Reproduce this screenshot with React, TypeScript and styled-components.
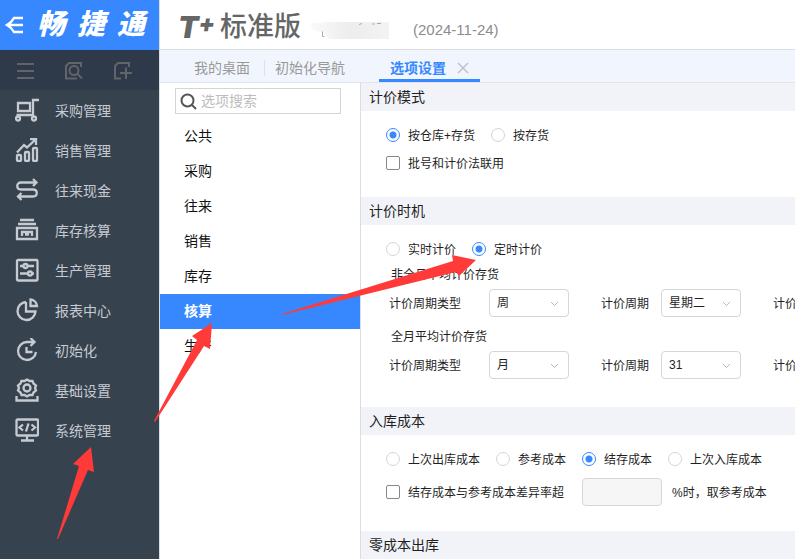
import React from "react";
import styled, { createGlobalStyle, css } from "styled-components";

const blue = "#3788ff";
const line = "#dcdde0";

const GlobalStyle = createGlobalStyle`
  *, *::before, *::after { box-sizing: border-box; }
  body {
    margin: 0;
    background: #fff;
    color: #1f1f1f;
    font-family: "Liberation Sans", "Noto Sans CJK SC", sans-serif;
    font-size: 12px;
  }
  button, input, select { font: inherit; color: inherit; }
`;

const Page = styled.div`
  position: relative;
  display: grid;
  grid-template-columns: 160px minmax(0, 1fr);
  min-height: 100vh;
  overflow: hidden;
`;

const Sidebar = styled.aside`
  display: flex;
  flex-direction: column;
  background: #37424f;
  border-right: 1px solid ${line};
`;

const Brand = styled.div`
  display: flex;
  align-items: center;
  height: 50px;
  padding-left: 5px;
  background: ${blue};
  color: #fff;
`;

const IconButton = styled.button`
  display: flex;
  padding: 0;
  border: 0;
  background: none;
  color: inherit;
  cursor: pointer;
`;

const BrandName = styled.div`
  display: flex;
  gap: 12px;
  margin-left: 14px;
  font-size: 28px;
  line-height: 50px;
  font-weight: 900;
  font-style: italic;
`;

const QuickBar = styled.div`
  display: flex;
  align-items: center;
  gap: 29px;
  height: 40px;
  padding: 2px 0 0 15px;
  background: #2e394a;
  color: #626468;
`;

const NavLink = styled.a`
  display: flex;
  align-items: center;
  gap: 16px;
  height: 40px;
  padding-left: 15px;
  color: #c6cad1;
  font-size: 14px;
  text-decoration: none;
`;

const Main = styled.main`
  display: flex;
  flex-direction: column;
  min-width: 0;
`;

const Header = styled.header`
  display: flex;
  align-items: center;
  height: 50px;
  padding-left: 18px;
  border-bottom: 1px solid ${line};
  color: #666;
`;

const Product = styled.div`
  display: flex;
  align-items: center;
  padding-top: 4px;
  font-size: 27px;
  line-height: 44px;
  font-weight: 500;
`;

const Mark = styled.span`
  width: 42px;
  font-family: Inter, sans-serif;
  font-size: 30px;
  font-weight: 900;
  font-style: italic;
`;

const Sup = styled.span`
  font-size: 24px;
  vertical-align: 6px;
  line-height: 1;
`;

const Account = styled.svg`
  margin: 13px 24px 0 9px;
`;

const Today = styled.span`
  padding-top: 9px;
  color: #8c8c8c;
  font-size: 15px;
`;

const TabBar = styled.nav`
  display: flex;
  height: 33px;
  padding-left: 24px;
  background: #f1f6fe;
  border-bottom: 1px solid #e2e6ec;
`;

const Tab = styled.div<{ $active?: boolean }>`
  position: relative;
  display: flex;
  align-items: center;
  gap: 11px;
  padding: 3px 11px 0 11px;
  color: #999;
  font-size: 14px;
  &:first-child { padding-right: 14px; padding-left: 10px; }
  & + &::before {
    content: "";
    position: absolute;
    left: 0;
    top: 10px;
    width: 1px;
    height: 16px;
    background: #dde1e8;
  }
  ${(p) => p.$active && css`
    color: ${blue};
    font-weight: 700;
    box-shadow: inset 0 -3px ${blue};
  `}
`;

const TabLink = styled.a`
  padding-bottom: 2px;
  color: inherit;
  text-decoration: none;
  white-space: nowrap;
`;

const CloseButton = styled(IconButton)<{ $hidden?: boolean }>`
  color: #bfc3c9;
  visibility: ${(p) => (p.$hidden ? "hidden" : "visible")};
`;

const Workspace = styled.div`
  display: grid;
  grid-template-columns: 201px minmax(0, 1fr);
  flex: 1;
`;

const OptionPane = styled.div`
  border-right: 1px solid ${line};
  padding-top: 5px;
`;

const SearchBox = styled.label`
  display: flex;
  align-items: center;
  gap: 4px;
  height: 26px;
  margin: 0 19px 5px 15px;
  padding-left: 4px;
  border: 1px solid #d5d5d5;
  color: #555;
`;

const SearchInput = styled.input`
  flex: 1;
  min-width: 0;
  padding: 0;
  border: 0;
  outline: 0;
  background: none;
  font-size: 14px;
  &::placeholder { color: #bdbdbd; }
`;

const OptionButton = styled.button<{ $active?: boolean }>`
  display: block;
  width: 100%;
  height: 35px;
  padding: 0 24px 4px;
  border: 0;
  background: ${(p) => (p.$active ? blue : "#fff")};
  color: ${(p) => (p.$active ? "#fff" : "#111")};
  font-size: 14px;
  font-weight: ${(p) => (p.$active ? 700 : 400)};
  text-align: left;
`;

const Settings = styled.div`
  min-width: 0;
  overflow: hidden;
`;

const SectionTitle = styled.h2`
  margin: 0;
  padding-left: 8px;
  background: #f2f3f8;
  font-size: 14px;
  line-height: 28px;
  font-weight: 400;
`;

const SectionBody = styled.div<{ $bottom?: number }>`
  padding: 10px 0 ${(p) => p.$bottom ?? 20}px 25px;
`;

const Row = styled.div<{ $tall?: boolean }>`
  display: flex;
  align-items: center;
  gap: 16px;
  height: ${(p) => (p.$tall ? 38 : 28)}px;
  white-space: nowrap;
`;

const Choice = styled.label`
  display: flex;
  align-items: center;
  gap: 8px;
`;

const LabelText = styled.span<{ $wide?: boolean }>`
  min-width: ${(p) => (p.$wide ? "88px" : "auto")};
  padding-bottom: 2px;
`;

const Radio = styled.input`
  appearance: none;
  width: 14px;
  height: 14px;
  margin: 0;
  border: 1px solid #d5d5d5;
  border-radius: 50%;
  background: #fff;
  &:checked {
    border-color: ${blue};
    background: radial-gradient(circle, ${blue} 3px, #fff 4px);
  }
`;

const Check = styled.input`
  appearance: none;
  width: 14px;
  height: 14px;
  margin: 0;
  border: 1px solid #888;
  border-radius: 2px;
  background: #fff;
  &:checked { background: ${blue}; }
`;

const GroupTitle = styled.h3`
  margin: 0;
  padding-left: 5px;
  font-size: 12px;
  line-height: 24px;
  font-weight: 400;
`;

const FieldRow = styled.div`
  display: flex;
  gap: 32px;
  height: 32px;
  padding-left: 3px;
  & + ${GroupTitle} { margin-top: 6px; }
`;

const Field = styled.label`
  display: flex;
  align-items: center;
  flex: none;
  gap: 12px;
  white-space: nowrap;
`;

const SelectWrap = styled.span`
  position: relative;
  display: flex;
  svg {
    position: absolute;
    right: 10px;
    top: 10px;
    pointer-events: none;
  }
`;

const Select = styled.select`
  appearance: none;
  width: 80px;
  height: 28px;
  padding: 0 20px 0 7px;
  border: 1px solid #d5d6d9;
  border-radius: 4px;
  background: #fff;
`;

const RateField = styled.label`
  display: flex;
  align-items: center;
  gap: 10px;
  margin-left: 2px;
`;

const RateInput = styled.input`
  width: 80px;
  height: 28px;
  border: 1px solid #d5d6d9;
  border-radius: 4px;
  background: #f6f6f6;
`;

const Annotations = styled.svg`
  position: absolute;
  left: 0;
  top: 0;
  pointer-events: none;
`;

function Icon({ size = 24, stroke = 2, children }: { size?: number; stroke?: number; children: React.ReactNode }) {
  return (
    <svg width={size} height={size} viewBox={`0 0 ${size} ${size}`} fill="none" stroke="currentColor" strokeWidth={stroke} aria-hidden="true">
      {children}
    </svg>
  );
}

const navItems: [string, React.ReactNode][] = [
  ["采购管理", <><path d="M3 5h12v8H3zM1.500 17H18V2h6" /><circle cx="3" cy="20.500" r="2" /><circle cx="19" cy="20.500" r="2" /></>],
  ["销售管理", <><rect x="2" y="17" width="4" height="6" rx="1" /><rect x="10" y="14" width="4" height="9" rx="1" /><rect x="18" y="10" width="4" height="13" rx="1" /><path d="M2 14.500 9 7l3 2.500L21 1M15 1h6v6" /></>],
  ["往来现金", <path d="M21 4.500H6c-5 0-5 7 0 7h12c5 0 5 7 0 7H3M18 1l3.500 3.500L18 8M6.500 15 3 18.500 6.500 22" />],
  ["库存核算", <path d="M5 2h14M3 6h18M2 10h20v11H2zM7 18v-4h10v4M10 16.500h4" />],
  ["生产管理", <><rect x="2" y="2" width="20.500" height="20.500" rx="1" /><path d="M5 8h3.500M12.500 8H19M5 15.500h8M17 15.500h2" /><circle cx="10.500" cy="8" r="2" /><circle cx="15" cy="15.500" r="2" /></>],
  ["报表中心", <><path d="M11 4a9 9 0 1 0 9.500 9.500H11V4" /><path d="M15.500 1.500V8H22a7 7 0 0 0-6.500-6.500z" /></>],
  ["初始化", <path d="M19 4h-7a9 9 0 1 0 9 10M15.500 0 19.500 4l-4 4M11.500 9v5h6" />],
  ["基础设置", <><path d="m12 1.500 2.500 1.500h3l1 2.500L21 7.500 20 10l1 2.500-2.500 2-1 2.500h-3L12 18.500 9.500 17h-3l-1-2.500-2.500-2L4 10 3 7.500l2.500-2 1-2.500h3z" /><circle cx="12" cy="10" r="3.500" /><path d="M1.500 18v4.500h21V18" /></>],
  ["系统管理", <><rect x="1.500" y="1.500" width="21.500" height="16" rx="1" /><path d="M12 18v4M6 22.500h13M8 6.500 4.500 9.500 8 12.500M16.500 6.500l3.500 3-3.500 3M13.500 5.500l-2.500 8" /></>],
];

const optionGroups = ["公共", "采购", "往来", "销售", "库存", "核算", "生产"];

function RadioRow({ name, items, selected }: { name: string; items: string[]; selected: string }) {
  return (
    <Row role="radiogroup">
      {items.map((item) => (
        <Choice key={item}>
          <Radio type="radio" name={name} defaultChecked={item === selected} />
          <LabelText>{item}</LabelText>
        </Choice>
      ))}
    </Row>
  );
}

function SelectField({ label, value, wide }: { label: string; value: string; wide?: boolean }) {
  return (
    <Field>
      <LabelText $wide={wide}>{label}</LabelText>
      <SelectWrap>
        <Select defaultValue={value}>
          <option>{value}</option>
        </Select>
        <Icon size={9} stroke={1}><path d="m1 3 3.500 3.500L8 3" stroke="#b5b8bd" /></Icon>
      </SelectWrap>
    </Field>
  );
}

export default function App() {
  return (
    <Page>
      <GlobalStyle />
      <Sidebar>
        <Brand>
          <IconButton aria-label="收起">
            <Icon size={18} stroke={2.4}><path d="M18 2H9Q7 6 2 9q5 3 7 7h9M2 9h16" /></Icon>
          </IconButton>
          <BrandName>
            <span>畅</span>
            <span>捷</span>
            <span>通</span>
          </BrandName>
        </Brand>
        <QuickBar>
          <IconButton aria-label="菜单">
            <Icon size={20}><path d="M2 3h17M2 10h17M2 17h17" /></Icon>
          </IconButton>
          <IconButton aria-label="查询">
            <Icon size={20}><path d="M13 17.500H2V5l3-3h12v4" /><circle cx="10" cy="9.500" r="4.500" /><path d="m13 12.500 5 5" /></Icon>
          </IconButton>
          <IconButton aria-label="新增">
            <Icon size={20}><path d="M8 17.500H2V5l3-3h11v4M7 12h12M13 6.500v11.500" /></Icon>
          </IconButton>
        </QuickBar>
        <nav>
          {navItems.map(([label, icon]) => (
            <NavLink href="#" key={label}>
              <Icon stroke={2.3}>{icon}</Icon>
              {label}
            </NavLink>
          ))}
        </nav>
      </Sidebar>

      <Main>
        <Header>
          <Product>
            <Mark>T<Sup>+</Sup></Mark>
            标准版
          </Product>
          <Account width="79" height="18" viewBox="0 0 79 18" aria-hidden="true">
            <defs>
              <linearGradient id="veil">
                <stop offset="0" stopColor="#fafafa" />
                <stop offset="0.5" stopColor="#ededed" />
                <stop offset="1" stopColor="#f3f3f3" />
              </linearGradient>
            </defs>
            <path d="M2 1 20 0h59v17H22q-5 0-7-6L3 8Q-1 4 2 1z" fill="url(#veil)" />
            <path d="M12.500 9.500V14.500h2M49 2.500l3-1M62 2h3M67 1.500h4" fill="none" stroke="#aaa" />
          </Account>
          <Today>(2024-11-24)</Today>
        </Header>
        <TabBar>
          <Tab><TabLink href="#">我的桌面</TabLink></Tab>
          <Tab>
            <TabLink href="#">初始化导航</TabLink>
            <CloseButton $hidden aria-label="关闭"><Icon size={12}><path d="m1 1 10 10M11 1 1 11" /></Icon></CloseButton>
          </Tab>
          <Tab $active>
            <TabLink href="#" aria-current="page">选项设置</TabLink>
            <CloseButton aria-label="关闭"><Icon size={12} stroke={1.5}><path d="m1 1 10 10M11 1 1 11" /></Icon></CloseButton>
          </Tab>
        </TabBar>

        <Workspace>
          <OptionPane>
            <SearchBox>
              <Icon size={17}><circle cx="7.500" cy="7.500" r="6" /><path d="m12 12 4 4" /></Icon>
              <SearchInput type="text" placeholder="选项搜索" aria-label="选项搜索" />
            </SearchBox>
            {optionGroups.map((name) => (
              <OptionButton key={name} $active={name === "核算"}>{name}</OptionButton>
            ))}
          </OptionPane>

          <Settings>
            <SectionTitle>计价模式</SectionTitle>
            <SectionBody>
              <RadioRow name="mode" items={["按仓库+存货", "按存货"]} selected="按仓库+存货" />
              <Row><Choice><Check type="checkbox" /><LabelText>批号和计价法联用</LabelText></Choice></Row>
            </SectionBody>

            <SectionTitle>计价时机</SectionTitle>
            <SectionBody $bottom={26}>
              <RadioRow name="timing" items={["实时计价", "定时计价"]} selected="定时计价" />
              <GroupTitle>非全月平均计价存货</GroupTitle>
              <FieldRow>
                <SelectField label="计价周期类型" value="周" wide />
                <SelectField label="计价周期" value="星期二" />
                <Field><LabelText>计价</LabelText></Field>
              </FieldRow>
              <GroupTitle>全月平均计价存货</GroupTitle>
              <FieldRow>
                <SelectField label="计价周期类型" value="月" wide />
                <SelectField label="计价周期" value="31" />
                <Field><LabelText>计价</LabelText></Field>
              </FieldRow>
            </SectionBody>

            <SectionTitle>入库成本</SectionTitle>
            <SectionBody>
              <RadioRow name="cost" items={["上次出库成本", "参考成本", "结存成本", "上次入库成本"]} selected="结存成本" />
              <Row $tall>
                <Choice><Check type="checkbox" /><LabelText>结存成本与参考成本差异率超</LabelText></Choice>
                <RateField><RateInput type="text" disabled /><LabelText>%时，取参考成本</LabelText></RateField>
              </Row>
            </SectionBody>

            <SectionTitle>零成本出库</SectionTitle>
          </Settings>
        </Workspace>
      </Main>

      <Annotations width="480" height="545" viewBox="0 0 480 545" fill="#ff3a38" aria-hidden="true">
        <path d="M91 447 73 464l6 2-22 73h1l30-69 6 2z" />
        <path d="m212 323-20 13 5 4-43 81 1 1 49-76 6 3z" />
        <path d="m476 260-24-5 1 6-171 53v1l174-43 3 4z" />
      </Annotations>
    </Page>
  );
}
